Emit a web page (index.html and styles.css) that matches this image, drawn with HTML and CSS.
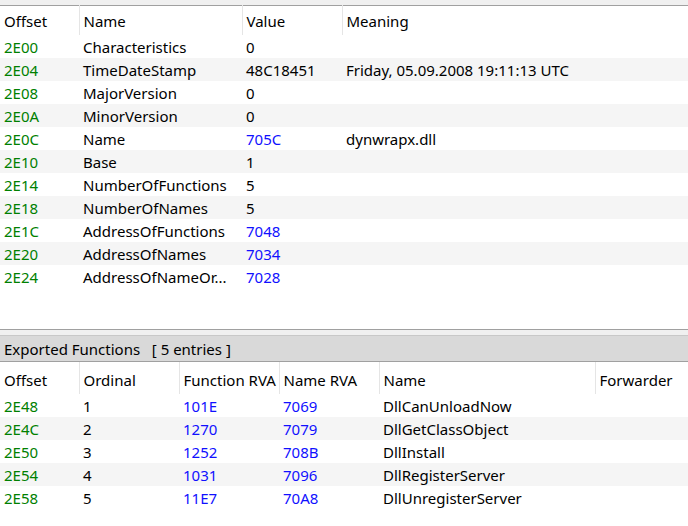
FILE: index.html
```html
<!DOCTYPE html>
<html lang="en">
<head>
    <meta charset="UTF-8">
    <title>Export Directory</title>
    <link rel="stylesheet" href="styles.css">
</head>
<body>

<!-- Export directory header -->
<div class="pane top-pane">
    <table class="grid dir-grid">
        <colgroup>
            <col style="width: 79px">
            <col style="width: 163px">
            <col style="width: 100px">
            <col>
        </colgroup>
        <thead>
            <tr><th>Offset</th><th>Name</th><th>Value</th><th>Meaning</th></tr>
        </thead>
        <tbody>
            <tr><td class="off">2E00</td><td>Characteristics</td><td>0</td><td></td></tr>
            <tr><td class="off">2E04</td><td>TimeDateStamp</td><td>48C18451</td><td>Friday, 05.09.2008 19:11:13 UTC</td></tr>
            <tr><td class="off">2E08</td><td>MajorVersion</td><td>0</td><td></td></tr>
            <tr><td class="off">2E0A</td><td>MinorVersion</td><td>0</td><td></td></tr>
            <tr><td class="off">2E0C</td><td>Name</td><td class="rva">705C</td><td>dynwrapx.dll</td></tr>
            <tr><td class="off">2E10</td><td>Base</td><td>1</td><td></td></tr>
            <tr><td class="off">2E14</td><td>NumberOfFunctions</td><td>5</td><td></td></tr>
            <tr><td class="off">2E18</td><td>NumberOfNames</td><td>5</td><td></td></tr>
            <tr><td class="off">2E1C</td><td>AddressOfFunctions</td><td class="rva">7048</td><td></td></tr>
            <tr><td class="off">2E20</td><td>AddressOfNames</td><td class="rva">7034</td><td></td></tr>
            <tr><td class="off">2E24</td><td>AddressOfNameOr...</td><td class="rva">7028</td><td></td></tr>
        </tbody>
    </table>
</div>

<!-- Exported functions list -->
<div class="pane bottom-pane">
    <div class="caption">Exported Functions &nbsp; [ 5 entries ]</div>
    <table class="grid func-grid">
        <colgroup>
            <col style="width: 79px">
            <col style="width: 100px">
            <col style="width: 100px">
            <col style="width: 100px">
            <col style="width: 216px">
            <col>
        </colgroup>
        <thead>
            <tr><th>Offset</th><th>Ordinal</th><th>Function RVA</th><th>Name RVA</th><th>Name</th><th>Forwarder</th></tr>
        </thead>
        <tbody>
            <tr><td class="off">2E48</td><td>1</td><td class="rva">101E</td><td class="rva">7069</td><td>DllCanUnloadNow</td><td></td></tr>
            <tr><td class="off">2E4C</td><td>2</td><td class="rva">1270</td><td class="rva">7079</td><td>DllGetClassObject</td><td></td></tr>
            <tr><td class="off">2E50</td><td>3</td><td class="rva">1252</td><td class="rva">708B</td><td>DllInstall</td><td></td></tr>
            <tr><td class="off">2E54</td><td>4</td><td class="rva">1031</td><td class="rva">7096</td><td>DllRegisterServer</td><td></td></tr>
            <tr><td class="off">2E58</td><td>5</td><td class="rva">11E7</td><td class="rva">70A8</td><td>DllUnregisterServer</td><td></td></tr>
        </tbody>
    </table>
</div>

</body>
</html>
```

FILE: styles.css
```css
/* General styles */
body {
    font-family: "Noto Sans", "Open Sans", sans-serif;
    font-size: 15px;
    color: #000;
    background-color: #fff;
    margin: 0;
    padding: 0;
}

/* Panes */
.pane {
    background-color: #fff;
}

.top-pane {
    height: 324px;
    border-top: 5px solid #f0f0f0;
    border-bottom: 1px solid #a0a0a0;
    box-shadow: inset 0 1px 0 #a0a0a0;
}

.bottom-pane {
    border-top: 5px solid #f0f0f0;
}

.caption {
    background-color: #d9d9d9;
    border-top: 1px solid #c8c8c8;
    border-bottom: 1px solid #a0a0a0;
    height: 25px;
    line-height: 27px;
    padding-left: 4px;
    white-space: pre;
}

/* Grid tables */
.grid {
    width: 100%;
    border-collapse: collapse;
    table-layout: fixed;
}

.grid th,
.grid td {
    padding: 1px 4px 0;
    text-align: left;
    font-weight: normal;
    white-space: nowrap;
    overflow: hidden;
}

.grid td {
    height: 22px;
}

.grid th {
    border-left: 1px solid #e5e5e5;
}

.grid th:first-child {
    border-left: none;
}

.dir-grid th {
    height: 28px;
    padding-top: 2px;
}

.func-grid th {
    height: 29px;
    padding-top: 3px;
}

.grid tbody tr:nth-child(even) td {
    background-color: #f5f5f5;
}

.grid td.off {
    color: #008000;
}

.grid td.rva {
    color: #1010ff;
}
```
